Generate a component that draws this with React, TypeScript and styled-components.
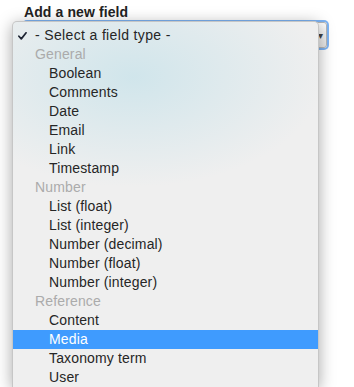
import React from 'react';
import styled, { createGlobalStyle } from 'styled-components';

const GlobalStyle = createGlobalStyle`
  html, body {
    margin: 0;
    padding: 0;
    background: #ffffff;
  }
  body {
    font-family: "Liberation Sans", Arial, sans-serif;
    overflow: hidden;
  }
`;

type Option = { label: string; group?: boolean; selected?: boolean; checked?: boolean };

const options: Option[] = [
  { label: '- Select a field type -', checked: true },
  { label: 'General', group: true },
  { label: 'Boolean' },
  { label: 'Comments' },
  { label: 'Date' },
  { label: 'Email' },
  { label: 'Link' },
  { label: 'Timestamp' },
  { label: 'Number', group: true },
  { label: 'List (float)' },
  { label: 'List (integer)' },
  { label: 'Number (decimal)' },
  { label: 'Number (float)' },
  { label: 'Number (integer)' },
  { label: 'Reference', group: true },
  { label: 'Content' },
  { label: 'Media', selected: true },
  { label: 'Taxonomy term' },
  { label: 'User' },
];

const Page = styled.div`
  padding: 4px 0 0 24px;
  width: 354px;
  height: 387px;
  box-sizing: border-box;
`;

const FieldLabel = styled.label`
  display: block;
  font-size: 14px;
  font-weight: bold;
  letter-spacing: 0.1px;
  color: #222222;
  line-height: 17px;
  margin-bottom: 1px;
`;

const SelectWrap = styled.div`
  position: relative;
  width: 303px;
`;

const SelectBox = styled.div`
  height: 24px;
  border: 1px solid #b8b8b8;
  border-radius: 3px;
  background: linear-gradient(#fefefe, #e8e8e8);
  box-shadow: 0 0 0 2px #7eb4f4;
  display: flex;
  align-items: center;
  justify-content: flex-end;
  padding-right: 3px;
  font-size: 10px;
  color: #444444;
`;

const Menu = styled.ul`
  position: absolute;
  left: -12px;
  top: -1px;
  width: 305px;
  margin: 0;
  padding: 4px 0 0;
  list-style: none;
  border-radius: 5px 5px 0 0;
  border: 1px solid #c6c6c6;
  border-bottom: none;
  background:
    radial-gradient(ellipse 190px 110px at 120px 55px, rgba(198, 226, 234, 0.75), rgba(220, 236, 240, 0) 100%),
    #efefef;
  box-shadow: 0 3px 16px rgba(0, 0, 0, 0.35);
  font-size: 14px;
  letter-spacing: 0.15px;
`;

const Row = styled.li<{ $group?: boolean; $selected?: boolean }>`
  position: relative;
  height: 19px;
  line-height: 19px;
  padding-left: ${(p) => (p.$group ? 22 : 36)}px;
  color: ${(p) => (p.$selected ? '#ffffff' : p.$group ? '#ababab' : '#262626')};
  background: ${(p) => (p.$selected ? '#3f9bfe' : 'transparent')};
  white-space: nowrap;
`;

const TopRow = styled(Row)`
  padding-left: 22px;
  letter-spacing: 0.35px;
`;

const Check = styled.svg`
  position: absolute;
  left: 5px;
  top: 6px;
`;

export default function App() {
  return (
    <Page>
      <GlobalStyle />
      <FieldLabel>Add a new field</FieldLabel>
      <SelectWrap>
        <SelectBox>▾</SelectBox>
        <Menu>
          {options.map((o) =>
            o.checked ? (
              <TopRow key={o.label}>
                <Check width="9" height="8" viewBox="0 0 9 8">
                  <path d="M0.9 4.2 L3.3 6.9 L8.1 0.8" fill="none" stroke="#1d2433" strokeWidth="1.7" strokeLinecap="round" strokeLinejoin="round" />
                </Check>
                {o.label}
              </TopRow>
            ) : (
              <Row key={o.label} $group={o.group} $selected={o.selected}>
                {o.label}
              </Row>
            )
          )}
        </Menu>
      </SelectWrap>
    </Page>
  );
}
